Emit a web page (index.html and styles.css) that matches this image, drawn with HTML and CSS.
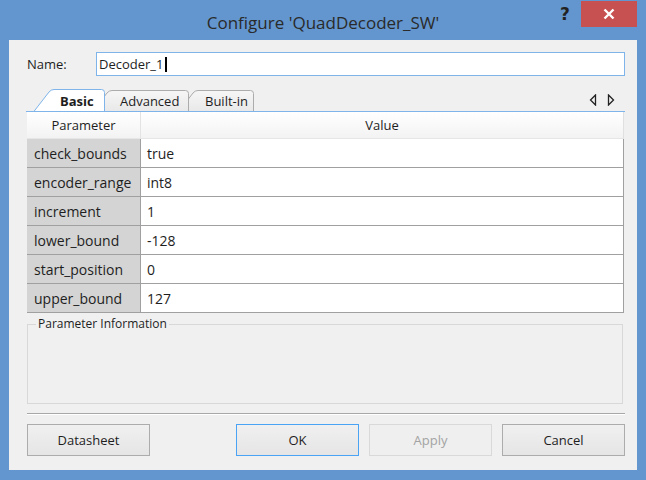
FILE: index.html
```html
<!DOCTYPE html>
<html>
<head>
<meta charset="utf-8">
<link rel="stylesheet" href="styles.css">
</head>
<body>
<div class="window">
  <div class="titlebar">
    <div class="title">Configure 'QuadDecoder_SW'</div>
    <div class="caption">
      <span class="help">?</span>
      <span class="close"><svg width="12" height="12" viewBox="0 0 12 12"><path d="M1.5 1.5 L10.5 10.5 M10.5 1.5 L1.5 10.5" stroke="#fff" stroke-width="2.4" fill="none"/></svg></span>
    </div>
  </div>
  <div class="client">
    <div class="name-row">
      <label class="name-label">Name:</label>
      <div class="name-input">Decoder_1<span class="caret"></span></div>
    </div>
    <div class="tabstrip">
      <div class="tabs">
        <div class="tab tab-basic active">
          <svg class="tab-shape" width="72" height="23" viewBox="0 0 72 23"><path d="M0.5 23 L16 3 Q18 0.5 21 0.5 L68.5 0.5 Q71.5 0.5 71.5 3.5 L71.5 23" fill="#fff" stroke="#7eb4ea"/></svg>
          <span class="tab-label">Basic</span>
        </div>
        <div class="tab tab-adv">
          <svg class="tab-shape" width="97" height="22" viewBox="0 0 97 22"><defs><linearGradient id="g1" x1="0" y1="0" x2="0" y2="1"><stop offset="0" stop-color="#f6f6f6"/><stop offset="1" stop-color="#e8e8e8"/></linearGradient></defs><path d="M0.5 22 L15 3 Q17 0.5 20 0.5 L93.5 0.5 Q96.5 0.5 96.5 3.5 L96.5 22" fill="url(#g1)" stroke="#acacac"/></svg>
          <span class="tab-label">Advanced</span>
        </div>
        <div class="tab tab-built">
          <svg class="tab-shape" width="76" height="22" viewBox="0 0 76 22"><defs><linearGradient id="g2" x1="0" y1="0" x2="0" y2="1"><stop offset="0" stop-color="#f6f6f6"/><stop offset="1" stop-color="#e8e8e8"/></linearGradient></defs><path d="M0.5 22 L15 3 Q17 0.5 20 0.5 L72.5 0.5 Q75.5 0.5 75.5 3.5 L75.5 22" fill="url(#g2)" stroke="#acacac"/></svg>
          <span class="tab-label">Built-in</span>
        </div>
      </div>
      <div class="scroll-arrows">
        <svg width="8" height="12" viewBox="0 0 8 12"><path d="M6.5 1 L1.5 6 L6.5 11 Z" fill="#f0f0f0" stroke="#222" stroke-width="1.3" stroke-linejoin="miter"/></svg>
        <svg width="8" height="12" viewBox="0 0 8 12"><path d="M1.5 1 L6.5 6 L1.5 11 Z" fill="#f0f0f0" stroke="#222" stroke-width="1.3" stroke-linejoin="miter"/></svg>
      </div>
    </div>
    <div class="tab-page">
      <div class="grid">
        <div class="hcell hcell-param">Parameter</div>
        <div class="hcell">Value</div>
        <div class="pcell">check_bounds</div><div class="vcell">true</div>
        <div class="pcell">encoder_range</div><div class="vcell">int8</div>
        <div class="pcell">increment</div><div class="vcell">1</div>
        <div class="pcell">lower_bound</div><div class="vcell">-128</div>
        <div class="pcell">start_position</div><div class="vcell">0</div>
        <div class="pcell">upper_bound</div><div class="vcell">127</div>
      </div>
    </div>
    <fieldset class="info">
      <legend>Parameter Information</legend>
    </fieldset>
    <div class="separator"></div>
    <div class="buttons">
      <button class="btn">Datasheet</button>
      <button class="btn btn-default push">OK</button>
      <button class="btn btn-disabled">Apply</button>
      <button class="btn">Cancel</button>
    </div>
  </div>
</div>
</body>
</html>
```
FILE: styles.css
```css
* { box-sizing: border-box; }
html, body { margin: 0; padding: 0; }
body {
  width: 646px;
  height: 480px;
  overflow: hidden;
  background: #6396ce;
  font-family: "Open Sans", "Noto Sans", sans-serif;
  font-size: 13px;
  color: #1e1e1e;
}
.window {
  width: 646px;
  height: 480px;
  display: flex;
  flex-direction: column;
}
.titlebar {
  height: 40px;
  flex: none;
  display: grid;
  grid-template-columns: 1fr auto 1fr;
  align-items: start;
}
.title {
  grid-column: 2;
  font-size: 17px;
  line-height: 20px;
  padding-top: 13px;
  color: #2a2a2a;
  white-space: nowrap;
}
.caption {
  grid-column: 3;
  justify-self: end;
  display: flex;
  align-items: flex-start;
  padding-top: 1px;
  padding-right: 9px;
}
.help {
  width: 26px;
  height: 26px;
  display: flex;
  align-items: center;
  justify-content: center;
  font-family: "DejaVu Sans", sans-serif;
  font-weight: bold;
  font-size: 17px;
  color: #222;
  margin-right: 3px;
}
.close {
  width: 56px;
  height: 26px;
  background: #c75050;
  display: flex;
  align-items: center;
  justify-content: center;
}
.client {
  flex: 1;
  margin: 0 9px 10px 9px;
  background: #f0f0f0;
  padding: 12px 12px 0 18px;
  display: flex;
  flex-direction: column;
}
.name-row {
  display: flex;
  align-items: center;
  height: 24px;
}
.name-label {
  width: 69px;
  flex: none;
}
.name-input {
  flex: 1;
  height: 24px;
  border: 1px solid #7eb4ea;
  background: #fff;
  padding-left: 2px;
  display: flex;
  align-items: center;
}
.caret {
  width: 2px;
  height: 15px;
  background: #000;
  margin-left: 2px;
}
.tabstrip {
  margin-top: 13px;
  height: 22px;
  display: flex;
  justify-content: space-between;
  align-items: flex-end;
}
.tabs {
  display: flex;
  align-items: flex-end;
  padding-left: 6px;
}
.tab {
  position: relative;
  display: flex;
  align-items: center;
}
.tab-shape {
  position: absolute;
  left: 0;
  top: 0;
}
.tab-label {
  position: relative;
}
.tab-basic {
  width: 72px;
  height: 23px;
  z-index: 3;
  padding-left: 27px;
  font-weight: bold;
  margin-bottom: -1px;
}
.tab-adv {
  width: 97px;
  height: 21px;
  z-index: 2;
  margin-left: -13px;
  padding-left: 28px;
}
.tab-built {
  width: 76px;
  height: 21px;
  z-index: 1;
  margin-left: -11px;
  padding-left: 27px;
}
.scroll-arrows {
  display: flex;
  gap: 10px;
  padding-right: 10px;
  padding-bottom: 5px;
}
.scroll-arrows svg { display: block; }
.tab-page {
  border-top: 1px solid #7eb4ea;
  margin-left: -1px;
  padding-left: 1px;
  position: relative;
  z-index: 4;
}
.grid {
  width: 597px;
  display: grid;
  grid-template-columns: 114px 1fr;
  grid-template-rows: 27px repeat(6, 29px);
}
.hcell {
  background: linear-gradient(#ffffff, #f3f3f3);
  display: flex;
  align-items: center;
  justify-content: center;
  border-right: 1px solid #e0e0e0;
  border-bottom: 1px solid #e6e6e6;
}
.hcell-param { border-right: 1px solid #e3e3e3; }
.pcell {
  background: #d4d4d4;
  border-right: 1px solid #a0a0a0;
  border-bottom: 1px solid #a0a0a0;
  padding-left: 7px;
  display: flex;
  align-items: center;
  font-size: 14px;
  white-space: nowrap;
}
.vcell {
  background: #fff;
  border-right: 1px solid #a0a0a0;
  border-bottom: 1px solid #a0a0a0;
  padding-left: 6px;
  display: flex;
  align-items: center;
  font-size: 14px;
}
.info {
  margin: 3px 2px 0 0;
  padding: 0 0 0 8px;
  height: 88px;
  border: 1px solid #d8d8d8;
  min-inline-size: 0;
}
.info legend {
  font-size: 12px;
  line-height: 16px;
  padding: 0 2px;
}
.separator {
  margin-top: 9px;
  height: 2px;
  border-top: 1px solid #a8a8a8;
  border-bottom: 1px solid #ffffff;
}
.buttons {
  margin-top: 9px;
  display: flex;
  gap: 10px;
}
.btn {
  width: 123px;
  height: 32px;
  border: 1px solid #acacac;
  background: linear-gradient(#f0f0f0, #e5e5e5);
  font-family: inherit;
  font-size: 13px;
  color: #1e1e1e;
  padding: 0;
  margin: 0;
  border-radius: 0;
}
.push { margin-left: auto; }
.btn-default { border-color: #4aa3f5; }
.btn-disabled {
  border-color: #d9d9d9;
  background: #efefef;
  color: #a3a3a3;
}
```
